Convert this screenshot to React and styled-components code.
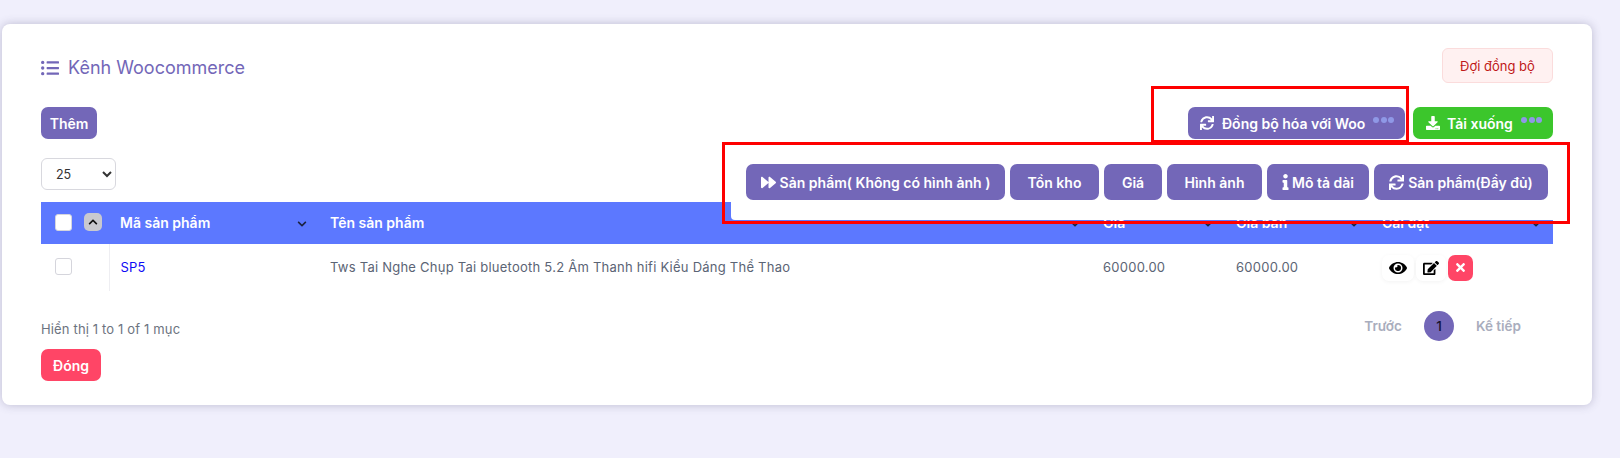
import React from "react";
import styled, { createGlobalStyle } from "styled-components";
import { FaSync, FaForward, FaInfo, FaEye, FaEdit, FaTimes, FaChevronUp, FaChevronDown, FaListUl, FaDownload } from "react-icons/fa";

const PURPLE = "#7367b8";

const GlobalStyle = createGlobalStyle`
  body {
    margin: 0;
    background: #f0effc;
    font-family: Inter, "Liberation Sans", sans-serif;
    font-size: 13px;
    color: #5b6475;
  }
`;

const Page = styled.div`
  position: relative;
  height: 458px;
  padding: 24px 28px 0 2px;
  box-sizing: border-box;
  overflow: hidden;
`;

const Card = styled.div`
  position: relative;
  background: #fff;
  border-radius: 8px;
  padding: 24px 39px;
  box-shadow: 0 0 10px rgba(70, 65, 110, 0.3);
`;

const TopRow = styled.div`
  display: flex;
  justify-content: space-between;
  align-items: center;
  height: 35px;
`;

const Title = styled.h4`
  display: flex;
  align-items: center;
  gap: 9px;
  margin: 4px 0 0;
  font-size: 18px;
  font-weight: 400;
  color: ${PURPLE};
  svg {
    font-size: 18px;
  }
`;

const PendingBadge = styled.div`
  display: flex;
  align-items: center;
  justify-content: center;
  width: 111px;
  height: 35px;
  box-sizing: border-box;
  background: #fff1f1;
  border: 1px solid #fbdcdc;
  border-radius: 6px;
  color: #c01818;
  font-size: 13px;
`;

const Toolbar = styled.div`
  position: relative;
  display: flex;
  justify-content: space-between;
  margin-top: 24px;
`;

const ToolbarRight = styled.div`
  display: flex;
  gap: 8px;
`;

const Button = styled.button`
  position: relative;
  display: inline-flex;
  align-items: center;
  justify-content: ${(p) => (p.$left ? "flex-start" : "center")};
  gap: ${(p) => p.$gap || 0}px;
  width: ${(p) => p.$w}px;
  height: ${(p) => p.$h || 32}px;
  padding: ${(p) => (p.$left ? `0 0 0 ${p.$pad || 12}px` : "0")};
  box-sizing: border-box;
  border: 0;
  border-radius: 7px;
  background: ${(p) => p.$bg || PURPLE};
  color: #fff;
  font-family: inherit;
  font-size: 14px;
  font-weight: 600;
  white-space: nowrap;
`;

const Dots = styled.span`
  position: absolute;
  top: 10px;
  right: 11px;
  display: flex;
  gap: 1.5px;
  i {
    width: 6px;
    height: 6px;
    border-radius: 50%;
    background: #8f98e6;
  }
`;

const Menu = styled.div`
  position: absolute;
  top: 38px;
  right: -19px;
  display: flex;
  gap: 5px;
  width: 841px;
  height: 75px;
  box-sizing: border-box;
  padding: 19px 0 0 15px;
  background: #fff;
  border-radius: 4px;
  z-index: 2;
`;

const InfoIcon = styled(FaInfo)`
  width: 7px;
  height: 16px;
`;

const LengthSelect = styled.select`
  display: block;
  width: 75px;
  height: 32px;
  margin-top: 19px;
  padding-left: 10px;
  background: #fff;
  border: 1px solid #d8d8de;
  border-radius: 6px;
  font-family: inherit;
  font-size: 12.5px;
  color: #333;
`;

const Table = styled.table`
  width: 1512px;
  margin-top: 12px;
  table-layout: fixed;
  border-collapse: collapse;
`;

const Head = styled.th`
  position: relative;
  height: 42px;
  padding: 0 0 2px 11px;
  box-sizing: border-box;
  background: #5c78ff;
  color: #fff;
  font-size: 14px;
  font-weight: 600;
  text-align: left;
`;

const SortIcon = styled(FaChevronDown)`
  position: absolute;
  right: 12px;
  top: 17px;
  width: 10px;
  height: 10px;
  color: #1c2340;
`;

const Cell = styled.td`
  height: 47px;
  padding: 0 0 2px 11px;
  box-sizing: border-box;
  font-size: 13px;
  letter-spacing: 0.24px;
  border-right: ${(p) => (p.$divider ? "1px solid #eeeef2" : "0")};
`;

const CheckCell = styled.div`
  display: flex;
  align-items: center;
  gap: 12px;
  padding-left: 3px;
`;

const Check = styled.input.attrs({ type: "checkbox" })`
  appearance: none;
  width: 17px;
  height: 17px;
  margin: 0;
  background: #fff;
  border: 1px solid #d5d5dc;
  border-radius: 3px;
`;

const Expand = styled.span`
  display: flex;
  align-items: center;
  justify-content: center;
  width: 18px;
  height: 18px;
  background: #c9c9cf;
  border-radius: 5px;
  color: #111;
  font-size: 10px;
`;

const ProductLink = styled.a`
  color: #0f0af5;
`;

const Actions = styled.div`
  display: flex;
  align-items: center;
  gap: 2px;
  margin-top: 2px;
`;

const ActionButton = styled.span`
  display: flex;
  align-items: center;
  justify-content: center;
  width: ${(p) => p.$w}px;
  height: 26px;
  border-radius: 7px;
  background: ${(p) => p.$bg || "#fff"};
  color: ${(p) => p.$color || "#000"};
  font-size: ${(p) => p.$size || 16}px;
  box-shadow: ${(p) => (p.$bg ? "none" : "0 1px 4px rgba(0, 0, 0, 0.05)")};
`;

const Footer = styled.div`
  display: flex;
  justify-content: space-between;
  align-items: center;
  height: 29px;
  margin-top: 20px;
`;

const Info = styled.div`
  padding-top: 7px;
  font-size: 13px;
  color: #6c7380;
  letter-spacing: 0.15px;
`;

const Pager = styled.div`
  display: flex;
  align-items: center;
  gap: 22px;
  margin-right: 32px;
  font-size: 13.5px;
  font-weight: 600;
  color: #a9adbd;
`;

const PageNumber = styled.span`
  display: flex;
  align-items: center;
  justify-content: center;
  width: 30px;
  height: 30px;
  border-radius: 50%;
  background: ${PURPLE};
  color: #17132f;
  font-weight: 500;
`;

const CloseRow = styled.div`
  margin-top: 9px;
`;

const Outline = styled.div`
  position: absolute;
  left: ${(p) => p.$x}px;
  top: ${(p) => p.$y}px;
  width: ${(p) => p.$w}px;
  height: ${(p) => p.$h}px;
  box-sizing: border-box;
  border: 3px solid #fe0000;
  z-index: 3;
`;

const columns = [
  { width: 68 },
  { width: 210, label: "Mã sản phẩm" },
  { width: 773, label: "Tên sản phẩm" },
  { width: 133, label: "Giá" },
  { width: 146, label: "Giá bán" },
  { width: 182, label: "Cài đặt" },
];

export default function App() {
  return (
    <Page>
      <GlobalStyle />
      <Card>
        <TopRow>
          <Title>
            <FaListUl />
            Kênh Woocommerce
          </Title>
          <PendingBadge>Đợi đồng bộ</PendingBadge>
        </TopRow>
        <Toolbar>
          <Button $w={56}>Thêm</Button>
          <ToolbarRight>
            <Button $w={217} $left $gap={8}>
              <FaSync size={14} />
              Đồng bộ hóa với Woo
              <Dots><i /><i /><i /></Dots>
            </Button>
            <Button $w={140} $bg="#3cc62c" $left $pad={13} $gap={7}>
              <FaDownload size={14} />
              Tải xuống
              <Dots><i /><i /><i /></Dots>
            </Button>
          </ToolbarRight>
          <Menu>
            <Button $w={259} $h={36} $gap={4}>
              <FaForward size={15} />
              Sản phẩm( Không có hình ảnh )
            </Button>
            <Button $w={89} $h={36}>Tồn kho</Button>
            <Button $w={58} $h={36}>Giá</Button>
            <Button $w={95} $h={36}>Hình ảnh</Button>
            <Button $w={102} $h={36} $gap={3}>
              <InfoIcon />
              Mô tả dài
            </Button>
            <Button $w={174} $h={36} $gap={4}>
              <FaSync size={15} />
              Sản phẩm(Đầy đủ)
            </Button>
          </Menu>
        </Toolbar>
        <LengthSelect defaultValue="25">
          <option>25</option>
        </LengthSelect>
        <Table>
          <colgroup>
            {columns.map((c, i) => (
              <col key={i} width={c.width} />
            ))}
          </colgroup>
          <thead>
            <tr>
              <Head>
                <CheckCell>
                  <Check />
                  <Expand><FaChevronUp /></Expand>
                </CheckCell>
              </Head>
              {columns.slice(1).map((c) => (
                <Head key={c.label}>
                  {c.label}
                  <SortIcon />
                </Head>
              ))}
            </tr>
          </thead>
          <tbody>
            <tr>
              <Cell $divider>
                <CheckCell><Check /></CheckCell>
              </Cell>
              <Cell><ProductLink>SP5</ProductLink></Cell>
              <Cell>Tws Tai Nghe Chụp Tai bluetooth 5.2 Âm Thanh hifi Kiểu Dáng Thể Thao</Cell>
              <Cell>60000.00</Cell>
              <Cell>60000.00</Cell>
              <Cell>
                <Actions>
                  <ActionButton $w={32} $size={18}><FaEye /></ActionButton>
                  <ActionButton $w={30}><FaEdit /></ActionButton>
                  <ActionButton $w={25} $bg="#ff4566" $color="#fff" $size={13}><FaTimes /></ActionButton>
                </Actions>
              </Cell>
            </tr>
          </tbody>
        </Table>
        <Footer>
          <Info>Hiển thị 1 to 1 of 1 mục</Info>
          <Pager>
            <span>Trước</span>
            <PageNumber>1</PageNumber>
            <span>Kế tiếp</span>
          </Pager>
        </Footer>
        <CloseRow>
          <Button $w={60} $bg="#ff4566">Đóng</Button>
        </CloseRow>
      </Card>
      <Outline $x={1151} $y={86} $w={258} $h={57} />
      <Outline $x={722} $y={142} $w={848} $h={82} />
    </Page>
  );
}
